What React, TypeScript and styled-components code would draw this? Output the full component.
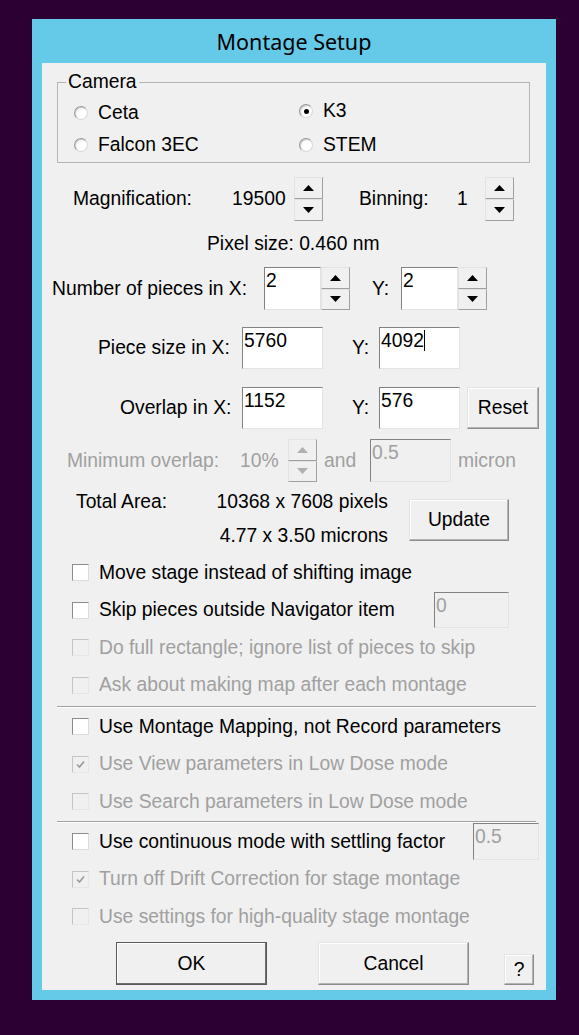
import React from 'react'
import styled, { createGlobalStyle } from 'styled-components'

const GlobalStyle = createGlobalStyle`
  html, body {
    margin: 0;
    padding: 0;
    background: #2d0033;
  }
  body {
    font-family: "Liberation Sans", Arial, sans-serif;
  }
`

const DISABLED = '#a0a0a0'

const Screen = styled.div`
  width: 579px;
  height: 1035px;
  box-sizing: border-box;
  padding: 19px 0 0 32px;
  background: #2d0033;
`

const Window = styled.div`
  width: 524px;
  box-sizing: border-box;
  padding: 0 10px 10px;
  background: #65c9e8;
`

const TitleBar = styled.div`
  height: 44px;
  display: flex;
  align-items: center;
  justify-content: center;
  font-family: "Noto Sans", "Open Sans", sans-serif;
  font-size: 21.5px;
  color: #000;
`

const Client = styled.div`
  height: 927px;
  box-sizing: border-box;
  padding-top: 19px;
  display: flex;
  flex-direction: column;
  background: #f0f0f0;
  font-size: 19.3px;
  color: #000;
`

const GroupBox = styled.div`
  position: relative;
  margin-left: 15px;
  width: 473px;
  height: 81px;
  box-sizing: border-box;
  border: 1px solid #b4b4b4;
  padding: 14px 0 0 16px;
  display: grid;
  grid-template-columns: 225px 1fr;
  grid-auto-rows: 32px;
`

const GroupTitle = styled.span`
  position: absolute;
  top: -12px;
  left: 8px;
  padding: 0 2px;
  line-height: 22px;
  background: #f0f0f0;
`

const RadioItem = styled.label<{ $lift?: number }>`
  display: flex;
  align-items: center;
  gap: 10px;
  margin-top: ${p => -(p.$lift ?? 0)}px;
`

const RadioDot = styled.span<{ $checked?: boolean }>`
  width: 14px;
  height: 14px;
  box-sizing: border-box;
  border-radius: 50%;
  border: 1px solid #9a9a9a;
  border-right-color: #d8d8d8;
  border-bottom-color: #d8d8d8;
  background: radial-gradient(circle at 60% 60%, #fff 40%, #e6e6e6 100%);
  box-shadow: inset 1px 1px 0 #cfcfcf;
  display: flex;
  align-items: center;
  justify-content: center;

  &::after {
    content: '';
    display: ${p => (p.$checked ? 'block' : 'none')};
    width: 5px;
    height: 5px;
    border-radius: 50%;
    background: #000;
  }
`

const Row = styled.div<{ $h: number; $mt?: number; $pl?: number }>`
  display: flex;
  align-items: center;
  height: ${p => p.$h}px;
  margin-top: ${p => p.$mt ?? 0}px;
  padding-left: ${p => p.$pl ?? 0}px;
  flex-shrink: 0;
`

const Label = styled.span<{ $w?: number; $gap?: number; $disabled?: boolean }>`
  ${p => (p.$w ? `width: ${p.$w}px;` : '')}
  margin-left: ${p => p.$gap ?? 0}px;
  flex-shrink: 0;
  white-space: nowrap;
  color: ${p => (p.$disabled ? DISABLED : '#000')};
`

const SpinBox = styled.div<{ $h: number }>`
  display: flex;
  flex-direction: column;
  width: 29px;
  height: ${p => p.$h}px;
  flex-shrink: 0;
`

const SpinHalf = styled.div`
  flex: 1;
  box-sizing: border-box;
  border: 1px solid;
  border-color: #e3e3e3 #a0a0a0 #a0a0a0 #e3e3e3;
  background: #f0f0f0;
  display: flex;
  align-items: center;
  justify-content: center;
`

const Edit = styled.div<{ $w: number; $h: number; $disabled?: boolean }>`
  width: ${p => p.$w}px;
  height: ${p => p.$h}px;
  box-sizing: border-box;
  flex-shrink: 0;
  border: 1px solid;
  border-color: #828282 #e3e3e3 #e3e3e3 #828282;
  padding: 2px 1px;
  line-height: 22px;
  white-space: nowrap;
  background: ${p => (p.$disabled ? '#f0f0f0' : '#fff')};
  color: ${p => (p.$disabled ? DISABLED : '#000')};
`

const Caret = styled.span`
  display: inline-block;
  width: 1px;
  height: 21px;
  vertical-align: -4px;
  background: #000;
`

const PushButton = styled.button<{ $w: number; $h: number; $gap?: number; $default?: boolean }>`
  width: ${p => p.$w}px;
  height: ${p => p.$h}px;
  margin-left: ${p => p.$gap ?? 0}px;
  flex-shrink: 0;
  box-sizing: border-box;
  padding: 0;
  font-family: inherit;
  font-size: 19.3px;
  color: #000;
  background: #f0f0f0;
  border: 1px solid;
  border-color: ${p => (p.$default ? '#5a5a5a' : '#e3e3e3 #8c8c8c #8c8c8c #e3e3e3')};
  box-shadow: ${p =>
    p.$default
      ? 'inset -1px -1px 0 #6e6e6e, inset 1px 1px 0 #fff'
      : 'inset -1px -1px 0 #b4b4b4, inset 1px 1px 0 #fff'};
`

const TotalBlock = styled.div`
  display: flex;
  margin-top: 3px;
  padding-left: 34px;
  height: 68px;
  flex-shrink: 0;
`

const TextLines = styled.div<{ $w: number; $right?: boolean }>`
  width: ${p => p.$w}px;
  display: flex;
  flex-direction: column;
  text-align: ${p => (p.$right ? 'right' : 'left')};
  line-height: 34px;
  white-space: nowrap;
`

const UpdateSlot = styled.div`
  margin: 14px 0 0 21px;
`

const CheckSection = styled.div<{ $mt?: number }>`
  display: flex;
  flex-direction: column;
  margin-top: ${p => p.$mt ?? 0}px;
  flex-shrink: 0;
`

const CheckRow = styled.div<{ $disabled?: boolean }>`
  display: flex;
  align-items: center;
  height: 37.5px;
  padding-left: 30px;
  white-space: nowrap;
  color: ${p => (p.$disabled ? DISABLED : '#000')};
`

const Box = styled.span<{ $disabled?: boolean }>`
  width: 17px;
  height: 17px;
  box-sizing: border-box;
  flex-shrink: 0;
  margin-right: 10px;
  border: 1px solid;
  border-color: ${p => (p.$disabled ? '#c4c4c4 #e6e6e6 #e6e6e6 #c4c4c4' : '#8c8c8c #dcdcdc #dcdcdc #8c8c8c')};
  background: ${p => (p.$disabled ? '#f0f0f0' : '#fff')};
  display: flex;
  align-items: center;
  justify-content: center;
`

const RowEdit = styled.div<{ $mr: number }>`
  margin-left: auto;
  margin-right: ${p => p.$mr}px;
`

const Separator = styled.div<{ $mt: number }>`
  margin: ${p => p.$mt}px 10px 0 15px;
  border-top: 1px solid #a0a0a0;
  border-bottom: 1px solid #fff;
  flex-shrink: 0;
`

const ButtonRow = styled.div`
  display: flex;
  align-items: flex-end;
  margin-top: 6.5px;
  padding-left: 74px;
  height: 43px;
  flex-shrink: 0;
`

const Arrow = ({ up, disabled }: { up?: boolean; disabled?: boolean }) => (
  <svg width="11" height="6" viewBox="0 0 11 6">
    <polygon
      points={up ? '5.5,0 11,6 0,6' : '0,0 11,0 5.5,6'}
      fill={disabled ? '#b0b0b0' : '#000'}
    />
  </svg>
)

const Spinner = ({ h, disabled }: { h: number; disabled?: boolean }) => (
  <SpinBox $h={h}>
    <SpinHalf>
      <Arrow up disabled={disabled} />
    </SpinHalf>
    <SpinHalf>
      <Arrow disabled={disabled} />
    </SpinHalf>
  </SpinBox>
)

const Check = ({ label, checked, disabled, children }: {
  label: string
  checked?: boolean
  disabled?: boolean
  children?: React.ReactNode
}) => (
  <CheckRow $disabled={disabled}>
    <Box $disabled={disabled}>
      {checked && (
        <svg width="9" height="9" viewBox="0 0 9 9">
          <polyline points="1,4.5 3.5,7 8,1.5" fill="none" stroke={disabled ? '#9a9a9a' : '#000'} strokeWidth="1.6" />
        </svg>
      )}
    </Box>
    {label}
    {children}
  </CheckRow>
)

export default function App() {
  return (
    <Screen>
      <GlobalStyle />
      <Window>
        <TitleBar>Montage Setup</TitleBar>
        <Client>
          <GroupBox>
            <GroupTitle>Camera</GroupTitle>
            <RadioItem>
              <RadioDot />
              Ceta
            </RadioItem>
            <RadioItem $lift={4}>
              <RadioDot $checked />
              K3
            </RadioItem>
            <RadioItem>
              <RadioDot />
              Falcon 3EC
            </RadioItem>
            <RadioItem>
              <RadioDot />
              STEM
            </RadioItem>
          </GroupBox>

          <Row $h={44} $mt={14} $pl={31}>
            <Label $w={159}>Magnification:</Label>
            <Label $w={62}>19500</Label>
            <Spinner h={44} />
            <Label $w={98} $gap={36}>Binning:</Label>
            <Label $w={28}>1</Label>
            <Spinner h={44} />
          </Row>

          <Row $h={46} $pl={165}>
            <Label>Pixel size: 0.460 nm</Label>
          </Row>

          <Row $h={43} $pl={10}>
            <Label $w={212}>Number of pieces in X:</Label>
            <Edit $w={57} $h={43}>2</Edit>
            <Spinner h={43} />
            <Label $w={29} $gap={22}>Y:</Label>
            <Edit $w={57} $h={43}>2</Edit>
            <Spinner h={43} />
          </Row>

          <Row $h={42} $mt={17} $pl={56}>
            <Label $w={144}>Piece size in X:</Label>
            <Edit $w={81} $h={42}>5760</Edit>
            <Label $w={27} $gap={29}>Y:</Label>
            <Edit $w={81} $h={42}>
              4092
              <Caret />
            </Edit>
          </Row>

          <Row $h={42} $mt={18} $pl={78}>
            <Label $w={122}>Overlap in X:</Label>
            <Edit $w={81} $h={42}>1152</Edit>
            <Label $w={27} $gap={29}>Y:</Label>
            <Edit $w={81} $h={42}>576</Edit>
            <PushButton $w={72} $h={42} $gap={7}>Reset</PushButton>
          </Row>

          <Row $h={43} $mt={10} $pl={25}>
            <Label $w={173} $disabled>Minimum overlap:</Label>
            <Label $w={48} $disabled>10%</Label>
            <Spinner h={43} disabled />
            <Label $w={46} $gap={7} $disabled>and</Label>
            <Edit $w={81} $h={43} $disabled>0.5</Edit>
            <Label $gap={7} $disabled>micron</Label>
          </Row>

          <TotalBlock>
            <TextLines $w={139}>
              <span>Total Area:</span>
            </TextLines>
            <TextLines $w={173} $right>
              <span>10368 x 7608 pixels</span>
              <span>4.77 x 3.50 microns</span>
            </TextLines>
            <UpdateSlot>
              <PushButton $w={100} $h={42}>Update</PushButton>
            </UpdateSlot>
          </TotalBlock>

          <CheckSection $mt={1}>
            <Check label="Move stage instead of shifting image" />
            <Check label="Skip pieces outside Navigator item">
              <RowEdit $mr={37}>
                <Edit $w={75} $h={36} $disabled>0</Edit>
              </RowEdit>
            </Check>
            <Check label="Do full rectangle; ignore list of pieces to skip" disabled />
            <Check label="Ask about making map after each montage" disabled />
          </CheckSection>

          <Separator $mt={2} />

          <CheckSection>
            <Check label="Use Montage Mapping, not Record parameters" />
            <Check label="Use View parameters in Low Dose mode" checked disabled />
            <Check label="Use Search parameters in Low Dose mode" disabled />
          </CheckSection>

          <Separator $mt={0.5} />

          <CheckSection>
            <Check label="Use continuous mode with settling factor">
              <RowEdit $mr={7}>
                <Edit $w={66} $h={37} $disabled>0.5</Edit>
              </RowEdit>
            </Check>
            <Check label="Turn off Drift Correction for stage montage" checked disabled />
            <Check label="Use settings for high-quality stage montage" disabled />
          </CheckSection>

          <ButtonRow>
            <PushButton $w={151} $h={43} $default>OK</PushButton>
            <PushButton $w={151} $h={43} $gap={51}>Cancel</PushButton>
            <PushButton $w={30} $h={31} $gap={35}>?</PushButton>
          </ButtonRow>
        </Client>
      </Window>
    </Screen>
  )
}
